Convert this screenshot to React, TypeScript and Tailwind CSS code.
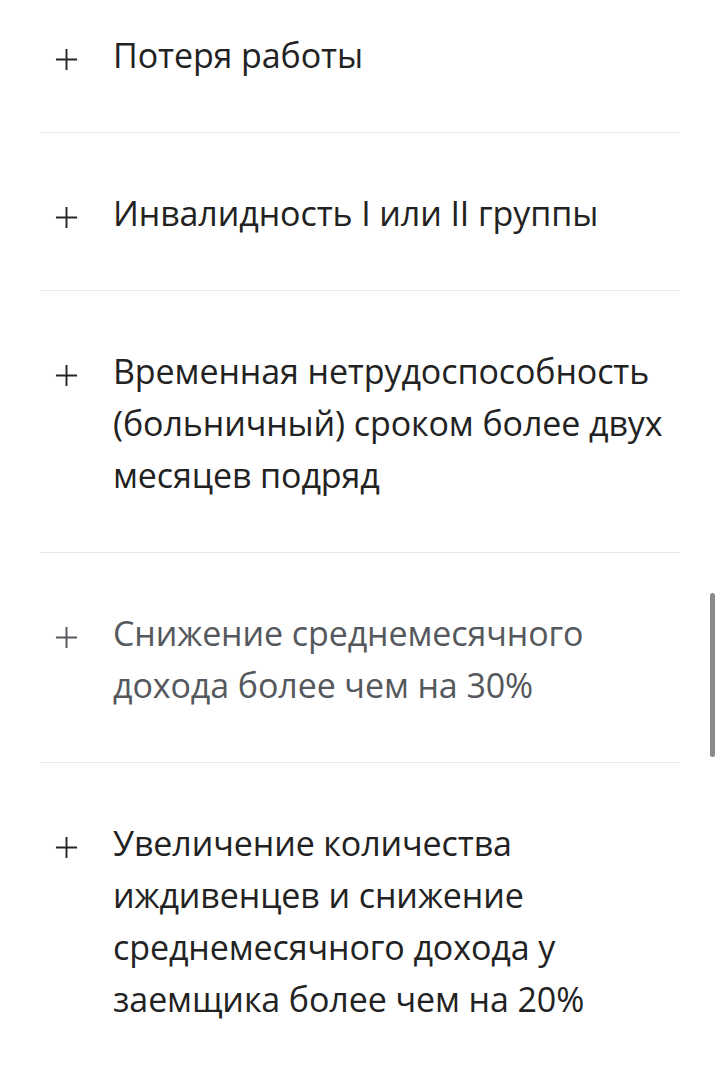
import React from "react";

type Item = {
  title: string[];
  muted?: boolean;
};

const items: Item[] = [
  { title: ["Потеря работы"] },
  { title: ["Инвалидность I или II группы"] },
  {
    title: [
      "Временная нетрудоспособность",
      "(больничный) сроком более двух",
      "месяцев подряд",
    ],
  },
  {
    title: ["Снижение среднемесячного", "дохода более чем на 30%"],
    muted: true,
  },
  {
    title: [
      "Увеличение количества",
      "иждивенцев и снижение",
      "среднемесячного дохода у",
      "заемщика более чем на 20%",
    ],
  },
];

const PlusIcon = ({ className }: { className?: string }) => (
  <svg
    viewBox="0 0 24 24"
    className={className}
    fill="none"
    stroke="currentColor"
    strokeWidth={2}
  >
    <path d="M12 1v22M1 12h22" />
  </svg>
);

const App = () => {
  return (
    <div className="relative min-h-[1080px] bg-white font-['Open_Sans','Noto_Sans',sans-serif]">
      <div className="px-10">
        {items.map((item, i) => (
          <div
            key={i}
            className={
              (i === 0 ? "pt-[29px] " : "pt-[54px] ") +
              "flex pb-[51px] border-b border-[#e9e9e9] last:border-b-0"
            }
          >
            <div className="w-[73px] h-[52px] shrink-0 flex items-center pl-[15px]">
              <PlusIcon
                className={
                  "w-[23px] h-[23px] mt-[9px] " +
                  (item.muted ? "text-[#55585c]" : "text-[#262626]")
                }
              />
            </div>
            <div
              className={
                "text-[34px] leading-[52px] tracking-[-0.1px] " +
                (item.muted ? "text-[#55585c]" : "text-[#222222]")
              }
            >
              {item.title.map((line, j) => (
                <div key={j}>{line}</div>
              ))}
            </div>
          </div>
        ))}
      </div>
      {/* scroll indicator */}
      <div className="absolute left-[710px] top-[593px] w-[5px] h-[164px] rounded-full bg-[#8a8a8a]" />
    </div>
  );
};

export default App;
